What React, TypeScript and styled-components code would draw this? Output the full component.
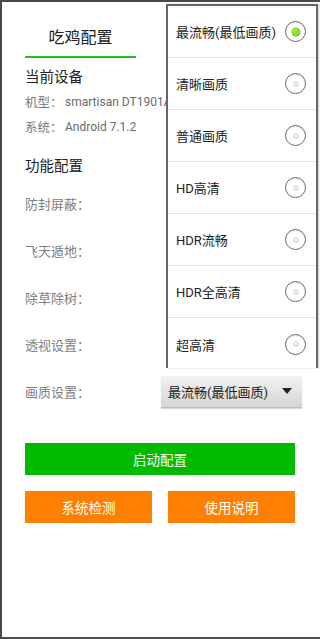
import styled, { createGlobalStyle } from 'styled-components';

const GlobalStyle = createGlobalStyle`
  html, body {
    margin: 0;
    padding: 0;
    background: #fff;
  }
  body {
    font-family: Roboto, "Noto Sans CJK SC", sans-serif;
  }
`;

const qualities = ['最流畅(最低画质)', '清晰画质', '普通画质', 'HD高清', 'HDR流畅', 'HDR全高清', '超高清'];
const features = ['防封屏蔽：', '飞天遁地：', '除草除树：', '透视设置：'];

const App = () => {
  return (
    <>
      <GlobalStyle />
      <Screen>
        <Content>
          <TitleTab>吃鸡配置</TitleTab>
          <SectionTitle>当前设备</SectionTitle>
          <InfoRow>
            <InfoLabel>机型：</InfoLabel>
            <InfoValue>smartisan DT1901A</InfoValue>
          </InfoRow>
          <InfoRow>
            <InfoLabel>系统：</InfoLabel>
            <InfoValue>Android 7.1.2</InfoValue>
          </InfoRow>
          <SectionTitle $gap={17}>功能配置</SectionTitle>
          <FeatureList>
            {features.map(f => (
              <FeatureRow key={f}>
                <FeatureLabel>{f}</FeatureLabel>
              </FeatureRow>
            ))}
            <FeatureRow>
              <FeatureLabel>画质设置：</FeatureLabel>
              <Spinner>
                <span>最流畅(最低画质)</span>
                <Caret />
              </Spinner>
            </FeatureRow>
          </FeatureList>
          <PrimaryButton>启动配置</PrimaryButton>
          <ButtonRow>
            <SecondaryButton>系统检测</SecondaryButton>
            <SecondaryButton>使用说明</SecondaryButton>
          </ButtonRow>
        </Content>

        <Popup>
          {qualities.map((q, i) => (
            <Option key={q} $last={i === qualities.length - 1}>
              <span>{q}</span>
              <Radio $checked={i === 0} />
            </Option>
          ))}
        </Popup>
      </Screen>
    </>
  );
};

export default App;

const Screen = styled.div`
  position: relative;
  width: 320px;
  height: 639px;
  box-sizing: border-box;
  border-top: 2px solid #4a4a4a;
  border-left: 2px solid #4a4a4a;
  border-bottom: 2px solid #4a4a4a;
  background: #fff;
  overflow: hidden;
`;

const Content = styled.div`
  display: flex;
  flex-direction: column;
  padding-left: 23px;
  padding-right: 25px;
`;

const TitleTab = styled.div`
  width: 111px;
  margin-top: 24px;
  padding-bottom: 6px;
  border-bottom: 2px solid #1cc11c;
  text-align: center;
  font-size: 16px;
  line-height: 24px;
  color: #222;
`;

const SectionTitle = styled.div<{ $gap?: number }>`
  margin-top: ${p => p.$gap ?? 9}px;
  font-size: 14.5px;
  line-height: 22px;
  color: #222;
`;

const InfoRow = styled.div`
  display: flex;
  align-items: center;
  height: 25px;
  font-size: 12.5px;
  color: #777;
`;

const InfoLabel = styled.span`
  width: 40px;
`;

const InfoValue = styled.span`
  font-size: 12px;
  color: #6a6a6a;
`;

const FeatureList = styled.div`
  display: flex;
  flex-direction: column;
  margin-top: 2px;
`;

const FeatureRow = styled.div`
  display: flex;
  align-items: center;
  justify-content: space-between;
  height: 47px;
`;

const FeatureLabel = styled.span`
  font-size: 13px;
  color: #808080;
`;

const Spinner = styled.div`
  display: flex;
  align-items: center;
  justify-content: space-between;
  width: 141px;
  height: 32px;
  box-sizing: border-box;
  margin-right: -7px;
  padding: 0 10px 0 7px;
  background: linear-gradient(#f2f2f2, #d6d6d6);
  border-bottom: 1px solid #bdbdbd;
  box-shadow: 0 1px 1px rgba(0, 0, 0, 0.15);
  font-size: 13px;
  color: #222;
`;

const Caret = styled.span`
  width: 0;
  height: 0;
  border-left: 5px solid transparent;
  border-right: 5px solid transparent;
  border-top: 6px solid #222;
`;

const PrimaryButton = styled.div`
  margin-top: 28px;
  height: 32px;
  display: flex;
  align-items: center;
  justify-content: center;
  background: #00bb00;
  color: #fff;
  font-size: 13.5px;
`;

const ButtonRow = styled.div`
  display: flex;
  justify-content: space-between;
  margin-top: 16px;
`;

const SecondaryButton = styled.div`
  width: 127px;
  height: 32px;
  display: flex;
  align-items: center;
  justify-content: center;
  background: #ff8000;
  color: #fff;
  font-size: 13.5px;
`;

const Popup = styled.div`
  position: absolute;
  top: 2px;
  left: 164px;
  width: 152px;
  height: 364px;
  box-sizing: border-box;
  background: #fff;
  border: 2px solid #666;
  border-bottom: none;
  box-shadow: 1px 0 2px rgba(0, 0, 0, 0.2);
  display: flex;
  flex-direction: column;
`;

const Option = styled.div<{ $last: boolean }>`
  display: flex;
  align-items: center;
  justify-content: space-between;
  height: 52px;
  flex-shrink: 0;
  box-sizing: border-box;
  padding: 0 10px 0 8px;
  border-bottom: ${p => (p.$last ? 'none' : '1px solid #e4e4e4')};
  font-size: 13px;
  color: #222;
`;

const Radio = styled.span<{ $checked: boolean }>`
  position: relative;
  width: 19px;
  height: 19px;
  border-radius: 50%;
  border: 1.5px solid #6a6a6a;
  background: #fff;
  box-shadow: inset 0 1px 2px rgba(0, 0, 0, 0.1);

  &::after {
    content: '';
    position: absolute;
    left: 50%;
    top: 50%;
    width: ${p => (p.$checked ? 9 : 6)}px;
    height: ${p => (p.$checked ? 9 : 6)}px;
    transform: translate(-50%, -50%);
    border-radius: 50%;
    background: ${p =>
      p.$checked
        ? 'radial-gradient(circle at 40% 35%, #a6ec4a, #62c212)'
        : 'radial-gradient(circle at 40% 35%, #f2f2f2, #cfcfcf)'};
  }
`;
